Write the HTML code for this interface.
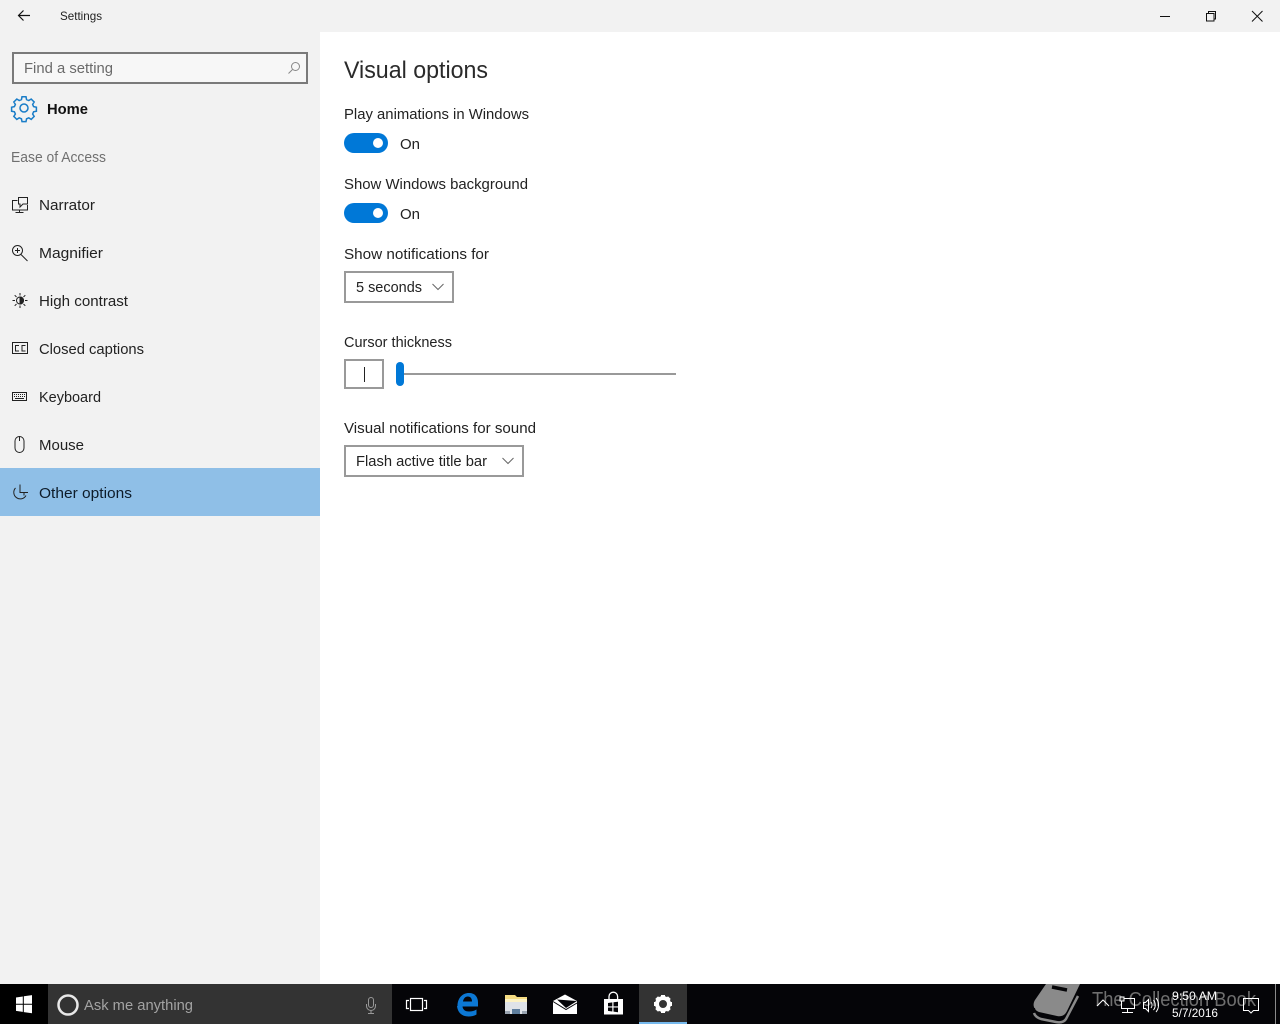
<!DOCTYPE html>
<html><head><meta charset="utf-8"><title>Settings</title>
<style>
html,body{margin:0;padding:0;background:#fff;width:1280px;height:1024px;overflow:hidden}
svg{display:block}
text{font-family:"Liberation Sans",sans-serif;font-size:15px;fill:#222}
</style></head><body>
<svg width="1280" height="1024" viewBox="0 0 1280 1024" xmlns="http://www.w3.org/2000/svg">
<rect width="1280" height="1024" fill="#fff"/>
<rect width="320" height="984" fill="#f2f2f2"/>
<rect width="1280" height="32" fill="#f2f2f2"/>
<!-- title bar -->
<path d="M30 15.500H18.500M23.500 10.500l-5 5 5 5" fill="none" stroke="#111" stroke-width="1.200"/>
<text x="60" y="20" style="font-size:12px" textLength="42" lengthAdjust="spacingAndGlyphs">Settings</text>
<path d="M1160 16.500h10" stroke="#111" stroke-width="1"/>
<path d="M1206.500 13.500h7.500v7.500h-7.500zM1208.500 13.500v-2h7v7.500h-1.500" fill="none" stroke="#111" stroke-width="1"/>
<path d="M1252 11l10.500 10.500M1262.500 11L1252 21.500" stroke="#111" stroke-width="1" fill="none"/>
<!-- search -->
<rect x="13" y="53" width="294" height="30" fill="#f7f7f7" stroke="#7a7a7a" stroke-width="2"/>
<text x="24" y="73" textLength="89" lengthAdjust="spacingAndGlyphs" style="fill:#6a6a6a">Find a setting</text>
<circle cx="295.500" cy="66.500" r="4" fill="none" stroke="#888" stroke-width="1"/>
<path d="M292.500 69.500L288.500 73.500" stroke="#888" stroke-width="1"/>
<!-- home -->
<g transform="translate(24 108) scale(.8)" fill="none" stroke="#1a7dc8" stroke-width="1.900">
<circle r="5"/>
<path d="M-2.500-14h5l.7 3.500 2.800 1.200 3-1.900 3.700 3.700-1.900 3 1.200 2.800 3.500.7v5l-3.500.7-1.200 2.800 1.900 3-3.700 3.700-3-1.900-2.800 1.200-.7 3.500h-5l-.7-3.500-2.800-1.200-3 1.900-3.700-3.700 1.900-3-1.200-2.800-3.500-.7v-5l3.500-.7 1.200-2.800-1.900-3 3.700-3.700 3 1.900 2.800-1.200z"/>
</g>
<text x="47" y="114" textLength="41" lengthAdjust="spacingAndGlyphs" style="font-weight:bold;fill:#111">Home</text>
<text x="11" y="162" textLength="95" lengthAdjust="spacingAndGlyphs" style="fill:#707070">Ease of Access</text>
<!-- selected -->
<rect y="468" width="320" height="48" fill="#8fbfe7"/>
<!-- nav icons -->
<g fill="none" stroke="#222" stroke-width="1">
<!-- narrator -->
<path d="M17.500 200.500h-5v9.500h15v-5M19.500 210.500v2.500M15.500 212.500h8"/>
<path d="M18.500 197.500h9v6.500h-4.500l-3 3v-3h-1.500z"/>
<!-- magnifier -->
<circle cx="17.500" cy="250.500" r="5"/>
<path d="M21 254.500l6.500 6.500M15 250.500h5M17.500 248v5"/>
<!-- high contrast -->
<circle cx="20" cy="300.500" r="3.500"/>
<path d="M20 297a3.500 3.500 0 0 1 0 7z" fill="#222"/>
<path d="M20 293v2.500M20 305.500v2.500M12.500 300.500h2.500M25 300.500h2.500M14.700 295.200l1.800 1.800M23.500 304l1.800 1.800M25.300 295.200l-1.800 1.800M16.500 304l-1.800 1.800"/>
<!-- cc -->
<rect x="12.500" y="342.500" width="15" height="11"/>
<path d="M19 345.500h-3.500v5.500H19M25.500 345.500H22v5.500h3.500"/>
<!-- keyboard -->
<rect x="12.500" y="392.500" width="14" height="8"/>
<path d="M14 394.500h11M14 396.500h11" stroke-dasharray="1 1"/>
<path d="M15 398.500h9"/>
<!-- mouse -->
<path d="M15 441a4.500 4.500 0 0 1 9 0v7a4.500 4.500 0 0 1-9 0z"/>
<path d="M19.500 437v4"/>
<!-- other -->
<path d="M15.500 488a6.500 6.500 0 1 0 10.500 7.500M20 484.500v8h8M24 492.500v3"/>
</g>
<text x="39" y="210" textLength="56" lengthAdjust="spacingAndGlyphs">Narrator</text>
<text x="39" y="258" textLength="64" lengthAdjust="spacingAndGlyphs">Magnifier</text>
<text x="39" y="306" textLength="89" lengthAdjust="spacingAndGlyphs">High contrast</text>
<text x="39" y="354" textLength="105" lengthAdjust="spacingAndGlyphs">Closed captions</text>
<text x="39" y="402" textLength="62" lengthAdjust="spacingAndGlyphs">Keyboard</text>
<text x="39" y="450" textLength="45" lengthAdjust="spacingAndGlyphs">Mouse</text>
<text x="39" y="498" textLength="93" lengthAdjust="spacingAndGlyphs" style="fill:#0e1c2a">Other options</text>
<!-- content -->
<text x="344" y="78" textLength="144" lengthAdjust="spacingAndGlyphs" style="font-size:24px;fill:#2a2a2a">Visual options</text>
<text x="344" y="119" textLength="185" lengthAdjust="spacingAndGlyphs">Play animations in Windows</text>
<rect x="344" y="133" width="44" height="20" rx="10" fill="#0078d7"/>
<circle cx="378" cy="143" r="5" fill="#fff"/>
<text x="400" y="149" textLength="20" lengthAdjust="spacingAndGlyphs">On</text>
<text x="344" y="189" textLength="184" lengthAdjust="spacingAndGlyphs">Show Windows background</text>
<rect x="344" y="203" width="44" height="20" rx="10" fill="#0078d7"/>
<circle cx="378" cy="213" r="5" fill="#fff"/>
<text x="400" y="219" textLength="20" lengthAdjust="spacingAndGlyphs">On</text>
<text x="344" y="259" textLength="145" lengthAdjust="spacingAndGlyphs">Show notifications for</text>
<rect x="345" y="272" width="108" height="30" fill="#fff" stroke="#999" stroke-width="2"/>
<text x="356" y="292" textLength="66" lengthAdjust="spacingAndGlyphs">5 seconds</text>
<path d="M432.500 284l5.500 5.500 5.500-5.500" fill="none" stroke="#666" stroke-width="1"/>
<text x="344" y="347" textLength="108" lengthAdjust="spacingAndGlyphs">Cursor thickness</text>
<rect x="345" y="360" width="38" height="28" fill="#fff" stroke="#999" stroke-width="2"/>
<rect x="364" y="367" width="1" height="15" fill="#222"/>
<rect x="404" y="373" width="272" height="2" fill="#999"/>
<rect x="396" y="362" width="8" height="24" rx="4" fill="#0078d7"/>
<text x="344" y="433" textLength="192" lengthAdjust="spacingAndGlyphs">Visual notifications for sound</text>
<rect x="345" y="446" width="178" height="30" fill="#fff" stroke="#999" stroke-width="2"/>
<text x="356" y="466" textLength="131" lengthAdjust="spacingAndGlyphs">Flash active title bar</text>
<path d="M502.500 458l5.500 5.500 5.500-5.500" fill="none" stroke="#666" stroke-width="1"/>
<!-- taskbar -->
<rect y="984" width="1280" height="40" fill="#050508"/>
<rect y="984" width="48" height="40" fill="#000"/>
<path d="M16 997.500l6.800-1v7.200H16zM23.800 996.300l8.200-1.200v8.600h-8.200zM16 1004.700h6.800v7.200l-6.800-1zM23.800 1004.700H32v8.600l-8.200-1.200z" fill="#fff"/>
<rect x="48" y="984" width="344" height="40" fill="#333"/>
<circle cx="68" cy="1005" r="9.500" fill="none" stroke="#e8e8e8" stroke-width="2.500"/>
<text x="84" y="1010" textLength="109" lengthAdjust="spacingAndGlyphs" style="fill:#a3a3a3">Ask me anything</text>
<g fill="none" stroke="#999" stroke-width="1">
<rect x="368.500" y="997.500" width="5" height="10" rx="2.500"/>
<path d="M366.500 1004v2a4.500 4.500 0 0 0 9 0v-2M371 1010.500v2.500M368 1013.500h6"/>
</g>
<!-- task view -->
<g fill="none" stroke="#fff" stroke-width="1.200">
<rect x="410.500" y="998.500" width="12" height="12"/>
<path d="M409 1000.500h-2.500v8H409M424 1000.500h2.500v8H424"/>
</g>
<!-- edge -->
<path d="M457.500 1006c0-8 5-13 11.500-13 6 0 9 4 9 9.500v4h-15.500c.5 3.500 3 5 6.500 5 3 0 5.500-.8 7.500-2v5c-2 1.300-5 2-8 2-7 0-11-4.500-11.500-10.500zM463 1001.500h9c0-3-1.500-5-4.200-5-2.500 0-4.300 2-4.800 5z" fill="#0c78d4" fill-rule="evenodd"/>
<!-- explorer -->
<path d="M505 995h10l2 2h10v5h-22z" fill="#f5dc82"/>
<rect x="505" y="999" width="22" height="3" fill="#fdf3c4"/>
<rect x="505" y="1002" width="22" height="12" fill="#dfe3e8"/>
<path d="M512 1014v-5h8v5" fill="#5f7f9e"/>
<rect x="505" y="1011" width="5" height="3" fill="#9aa5b1"/>
<rect x="522" y="1011" width="5" height="3" fill="#9aa5b1"/>
<!-- mail -->
<path d="M553 1001l12-6.500 12 6.500v13h-24z" fill="#fff"/>
<path d="M557 999.500l20 1.500-11 7z" fill="#050508"/>
<path d="M553 1001.500l13 8 11-6.500" fill="none" stroke="#050508" stroke-width="1"/>
<!-- store -->
<path d="M604 999h19v15.500h-19z" fill="#fff"/>
<path d="M609 999v-2.500a4.300 4.300 0 0 1 8.600 0v2.500" fill="none" stroke="#fff" stroke-width="1.300"/>
<path d="M608 1003l4.300-.6v4h-4.300zM613.500 1002.300l4.500-.6v4.700h-4.500zM608 1007.500h4.300v4l-4.300-.6zM613.500 1007.500h4.500v4.700l-4.500-.6z" fill="#050508"/>
<!-- active settings -->
<rect x="639" y="984" width="48" height="40" fill="#333"/>
<rect x="639" y="1022" width="48" height="2" fill="#76b9ed"/>
<g transform="translate(663 1004)">
<circle r="6" fill="none" stroke="#fff" stroke-width="4"/>
<path d="M-2-9h4v3h-4zM-2 6h4v3h-4zM-9-2h3v4h-3zM6-2h3v4h-3z" fill="#fff"/>
<path d="M-2-9h4v3h-4zM-2 6h4v3h-4zM-9-2h3v4h-3zM6-2h3v4h-3z" fill="#fff" transform="rotate(45)"/>
</g>
<!-- watermark -->
<path d="M1046 984h34l-13 27c-2 4-5 6-10 5l-18-4c-5-2-7-7-4-12z" fill="#8a8a8a"/>
<path d="M1052 987l15 3" stroke="#050508" stroke-width="3.500" fill="none"/>
<path d="M1034 1008c0 4 3 6 7 7l16 4c4 1 7 0 9-3l11-22" fill="none" stroke="#050508" stroke-width="2"/>
<path d="M1034 1013c1 3 4 5 7 6l15 3c5 1 8 0 10-3l12-23" fill="none" stroke="#8a8a8a" stroke-width="2.500"/>
<text x="1092" y="1006" textLength="164" lengthAdjust="spacingAndGlyphs" style="font-size:20px;fill:#6e6e6e">The Collection Book</text>
<!-- tray -->
<g fill="none" stroke="#fff" stroke-width="1">
<path d="M1097 1006l6-6 6 6"/>
<rect x="1121.500" y="998.500" width="13" height="10"/>
<rect x="1120" y="997" width="4" height="4" fill="#333"/>
<path d="M1127.500 1008.500v4M1122 1012.500h11"/>
<path d="M1143.500 1002.500h2l3-3v12l-3-3h-2z"/>
<path d="M1151 1002a5 5 0 0 1 0 6M1153.500 1000a8 8 0 0 1 0 10M1156 998a11 11 0 0 1 0 14"/>
<path d="M1243.500 998.500h15v12h-5l-2.500 2.500-2.500-2.500h-5z"/>
</g>
<text x="1172" y="1000" textLength="45" lengthAdjust="spacingAndGlyphs" style="font-size:12px;fill:#fff">9:50 AM</text>
<text x="1172" y="1017" textLength="46" lengthAdjust="spacingAndGlyphs" style="font-size:12px;fill:#fff">5/7/2016</text>
<rect x="1275" y="984" width="1" height="40" fill="#8a8a8a"/>
</svg>
</body></html>
